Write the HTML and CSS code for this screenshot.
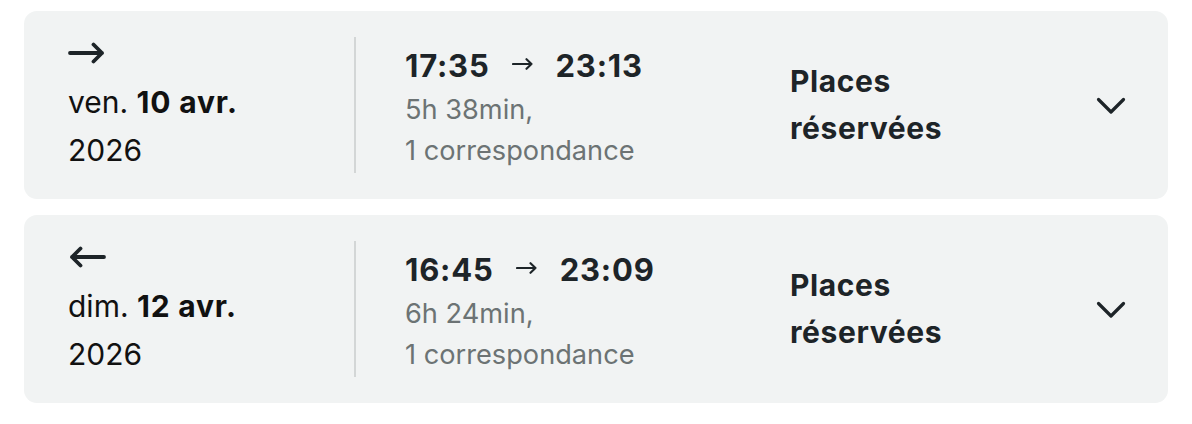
FILE: index.html
```html
<!DOCTYPE html>
<html lang="fr">
<head>
<meta charset="utf-8">
<title>Trajets</title>
<link rel="stylesheet" href="styles.css">
</head>
<body>
<div class="list">
  <div class="card">
    <div class="when">
      <svg class="dir" width="38" height="22" viewBox="0 0 38 22"><path d="M2 11H34M25.5 2.5L34 11L25.5 19.5" fill="none" stroke="#1d2428" stroke-width="3.8" stroke-linecap="round" stroke-linejoin="round"/></svg>
      <div class="date">ven. <b>10 avr.</b></div>
      <div class="date">2026</div>
    </div>
    <div class="divider"></div>
    <div class="trip">
      <div class="times"><span>17:35</span><svg width="22" height="12" viewBox="0 0 22 12"><path d="M1 6H19.5M14.5 1.2L19.5 6L14.5 10.8" fill="none" stroke="#1d2428" stroke-width="2.1" stroke-linecap="round" stroke-linejoin="round"/></svg><span>23:13</span></div>
      <div class="meta">5h 38min,</div>
      <div class="meta">1 correspondance</div>
    </div>
    <div class="fare">Places<br>réservées</div>
    <svg class="chev" width="30" height="18" viewBox="0 0 30 18"><path d="M2.5 2.5L15 15L27.5 2.5" fill="none" stroke="#1d2428" stroke-width="3.2" stroke-linecap="round" stroke-linejoin="round"/></svg>
  </div>
  <div class="card">
    <div class="when">
      <svg class="dir" width="38" height="22" viewBox="0 0 38 22"><path d="M36 11H4M12.5 2.5L4 11L12.5 19.5" fill="none" stroke="#1d2428" stroke-width="3.8" stroke-linecap="round" stroke-linejoin="round"/></svg>
      <div class="date">dim. <b>12 avr.</b></div>
      <div class="date">2026</div>
    </div>
    <div class="divider"></div>
    <div class="trip">
      <div class="times"><span>16:45</span><svg width="22" height="12" viewBox="0 0 22 12"><path d="M1 6H19.5M14.5 1.2L19.5 6L14.5 10.8" fill="none" stroke="#1d2428" stroke-width="2.1" stroke-linecap="round" stroke-linejoin="round"/></svg><span>23:09</span></div>
      <div class="meta">6h 24min,</div>
      <div class="meta">1 correspondance</div>
    </div>
    <div class="fare">Places<br>réservées</div>
    <svg class="chev" width="30" height="18" viewBox="0 0 30 18"><path d="M2.5 2.5L15 15L27.5 2.5" fill="none" stroke="#1d2428" stroke-width="3.2" stroke-linecap="round" stroke-linejoin="round"/></svg>
  </div>
</div>
</body>
</html>
```
FILE: styles.css
```css
* { box-sizing: border-box; }
html, body { margin: 0; background: #ffffff; }
body {
  font-family: Inter, "Liberation Sans", sans-serif;
  color: #1d2428;
}
.list {
  display: flex;
  flex-direction: column;
  gap: 16px;
  padding: 11px 24px;
}
.card {
  background: #f1f3f3;
  border-radius: 13px;
  padding: 26px 44px 26px 44px;
  display: flex;
  align-items: flex-start;
  height: 188px;
}
.when {
  width: 286px;
  margin-top: 5px;
}
.dir { display: block; margin-bottom: 14px; }
.date {
  font-size: 30px;
  line-height: 48px;
  color: #111;
}
.date b { font-weight: 700; letter-spacing: 0.8px; }
.divider {
  width: 2px;
  height: 136px;
  background: #d3d6d6;
  flex: none;
}
.trip {
  width: 434px;
  padding-left: 49px;
  padding-top: 9px;
}
.times {
  display: flex;
  align-items: center;
  gap: 22px;
  font-size: 31px;
  font-weight: 700;
  letter-spacing: 0.8px;
  line-height: 40px;
  margin-bottom: 3px;
}
.times svg { margin-top: -4px; }
.meta {
  font-size: 27.2px;
  line-height: 41px;
  color: #6c7374;
}
.fare {
  flex: 1;
  margin-top: 21px;
  font-size: 30px;
  font-weight: 700;
  letter-spacing: 0.6px;
  line-height: 47px;
}
.chev {
  margin-top: 60px;
  margin-right: -2px;
}
```
